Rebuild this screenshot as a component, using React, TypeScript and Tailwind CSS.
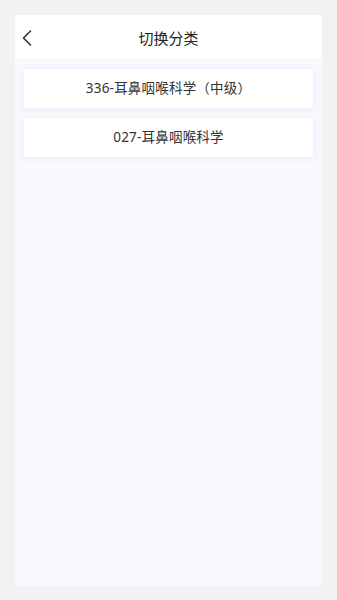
import { ChevronLeft } from "lucide-react";

const categories = ["336-耳鼻咽喉科学（中级）", "027-耳鼻咽喉科学"];

export default function App() {
  return (
    <div
      className="w-[337px] h-[600px] bg-[#f2f2f2] pt-[15px] pb-[14px] px-[15px] flex"
      style={{ fontFamily: '"Noto Sans", "Noto Sans CJK SC", sans-serif' }}
    >
      <div className="flex-1 flex flex-col bg-[#f8f9fd]">
        {/* Header */}
        <header className="h-[43px] pt-[3px] bg-white relative flex items-center justify-center shrink-0">
          <button type="button" className="absolute left-[-2px] top-[9px] text-[#333]" aria-label="返回">
            <ChevronLeft className="w-[28px] h-[28px]" strokeWidth={1.4} />
          </button>
          <h1 className="text-[15px] text-[#222] font-normal">切换分类</h1>
        </header>

        {/* List */}
        <div className="flex flex-col gap-[10px] px-[9px] pt-[11px]">
          {categories.map((c) => (
            <div
              key={c}
              className="h-[39px] bg-white flex items-center justify-center text-[13.5px] tracking-[0.2px] text-[#333] shadow-[0_1px_6px_rgba(200,210,235,0.35)]"
            >
              {c}
            </div>
          ))}
        </div>
      </div>
    </div>
  );
}
